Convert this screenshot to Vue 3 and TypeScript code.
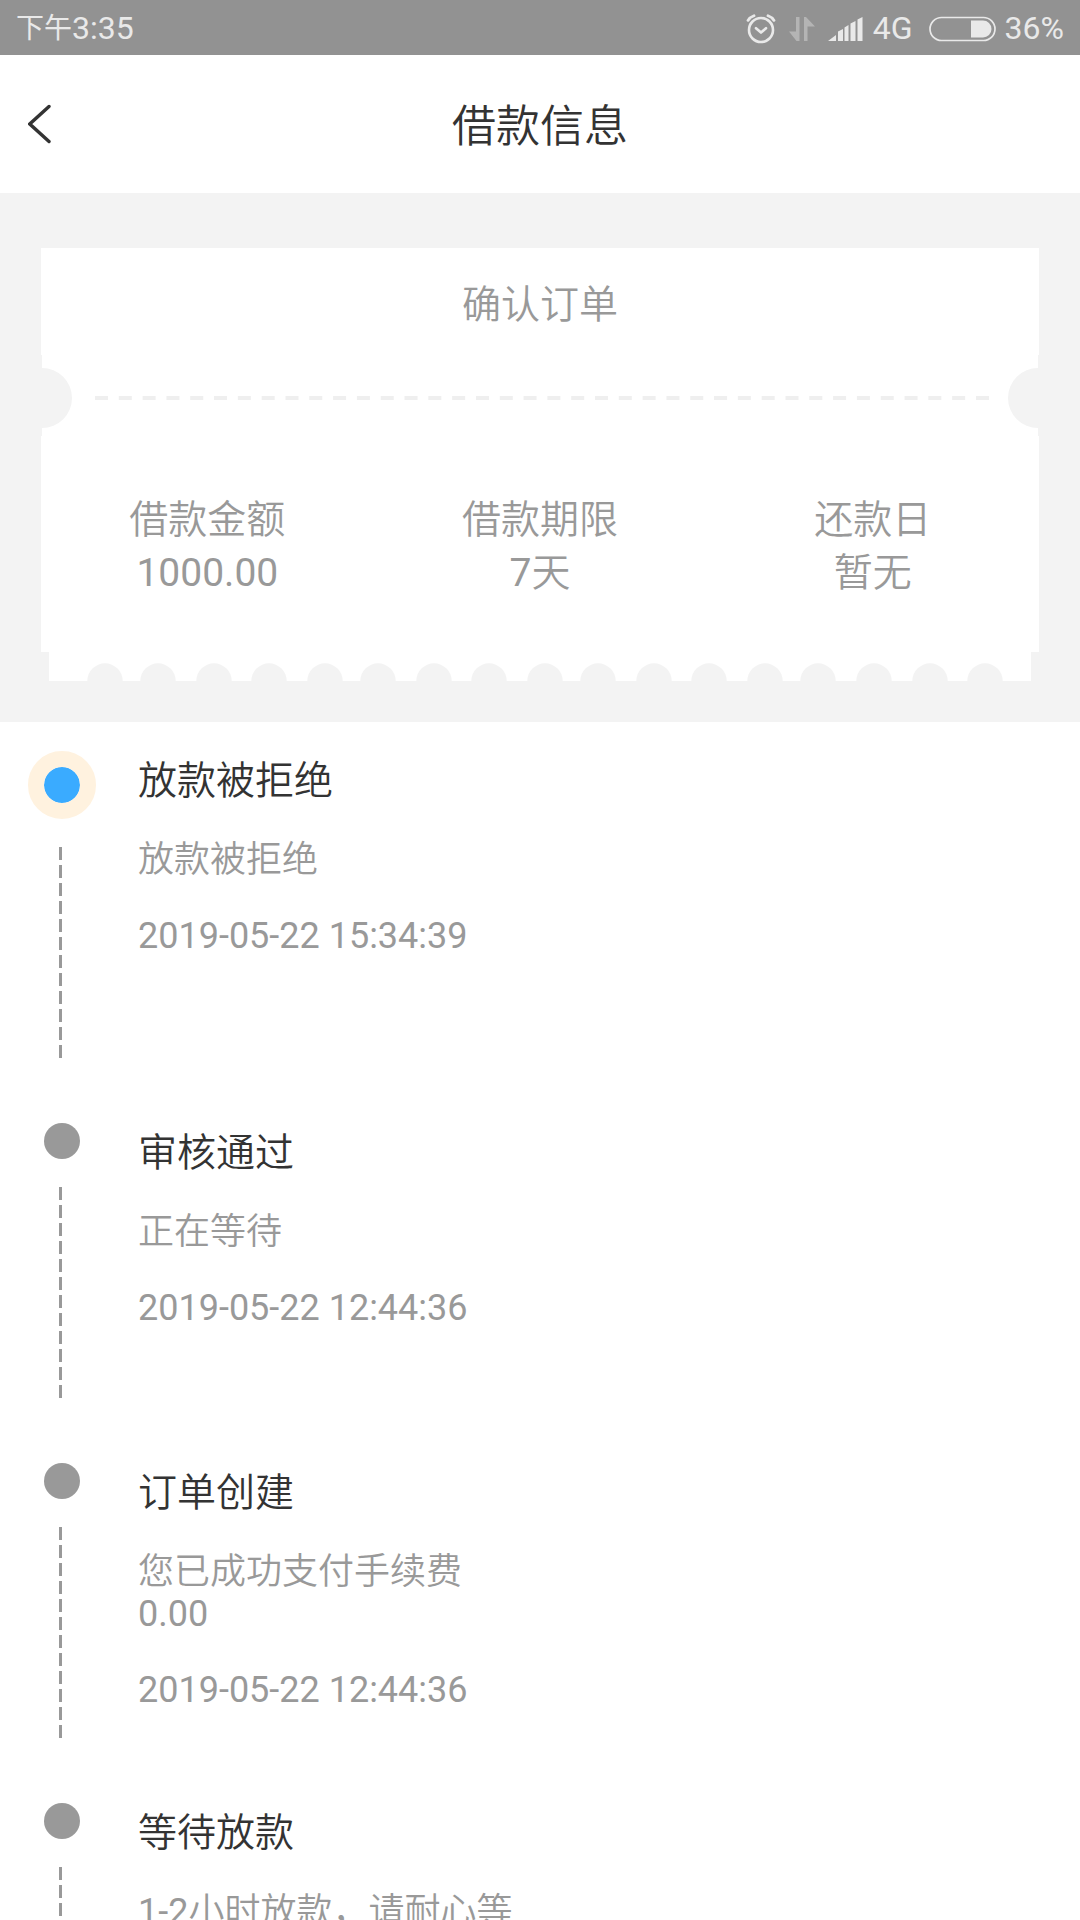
<script setup lang="ts">
interface Fact {
  label: string
  value: string
}

interface Step {
  title: string
  detail: string
  time?: string
  active?: boolean
}

interface Run {
  text: string
  numeric: boolean
}

const facts: Fact[] = [
  { label: '借款金额', value: '1000.00' },
  { label: '借款期限', value: '7天' },
  { label: '还款日', value: '暂无' },
]

const steps: Step[] = [
  { title: '放款被拒绝', detail: '放款被拒绝', time: '2019-05-22 15:34:39', active: true },
  { title: '审核通过', detail: '正在等待', time: '2019-05-22 12:44:36' },
  { title: '订单创建', detail: '您已成功支付手续费 0.00', time: '2019-05-22 12:44:36' },
  { title: '等待放款', detail: '1-2小时放款，请耐心等' },
]

// Centres of the half circles punched out of the ticket's lower edge
const holes: number[] = [56, 109, 165, 220, 276, 329, 385, 440, 496, 549, 605, 660, 716, 769, 825, 881, 936]

// Numbers take a regular weight, the Chinese text around them a lighter one
function runs(text: string): Run[] {
  return text
    .split(/([\d.-]+)/)
    .filter((part) => part !== '')
    .map((part) => ({ text: part, numeric: /^[\d.-]+$/.test(part) }))
}
</script>

<template>
  <div class="page" lang="zh-CN">
    <div class="status">
      <div class="clock"><span class="period">下午</span><span>3:35</span></div>
      <div class="indicators">
        <svg class="alarm" width="30" height="30" viewBox="0 0 30 30" fill="none" stroke="currentColor" stroke-linecap="round">
          <circle cx="15" cy="16" r="12" stroke-width="2.6" />
          <path d="M10 14.2l5 4.4 5-4.4" stroke-width="2.6" stroke-linejoin="round" />
          <path d="M2 6.4Q4 3.2 8 1.8M28 6.4Q26 3.2 22 1.8" stroke-width="2.8" />
        </svg>
        <svg class="traffic" width="26" height="26" viewBox="0 0 26 26" fill="currentColor">
          <path d="M7 1h3.5v24H7.500L0 15.500h7zM15 1h2l9 9.500h-7.500V25H15z" />
        </svg>
        <svg class="signal" width="35" height="24" viewBox="0 0 35 24" fill="currentColor">
          <path d="M0 24l8-6v6zM10 24V14.500l5-2.500v12zM16.500 24V10.500l4-2.500v16zM22.500 24V6.500l5-2.500v20zM29.500 24V2.500l5-2.500v24z" />
        </svg>
        <span class="network">4G</span>
        <svg class="battery" width="67" height="26" viewBox="0 0 67 26">
          <rect x="1" y="1.500" width="65" height="23" rx="11.500" fill="none" stroke="currentColor" stroke-width="1.700" />
          <path d="M42 4.500h12a8.500 8.500 0 0 1 0 17H42z" fill="currentColor" />
        </svg>
        <span>36%</span>
      </div>
    </div>

    <header class="bar">
      <button class="back" type="button" aria-label="返回">
        <svg width="24" height="40" viewBox="0 0 24 40" fill="none" stroke="currentColor" stroke-width="3.400" stroke-linecap="round">
          <path d="M21 2.500L1.800 20 21 37.500" />
        </svg>
      </button>
      <h1>借款信息</h1>
      <span></span>
    </header>

    <main>
      <section class="summary">
        <div class="ticket">
          <h2>确认订单</h2>
          <svg class="notches" viewBox="0 0 998 81" aria-hidden="true">
            <path d="M0 0h1v13a30 30 0 0 1 0 60v8H0zM998 0h-1v13a30 30 0 0 0 0 60v8h1z" fill="#f3f3f3" />
            <path d="M54 43h895" stroke="#efefef" stroke-width="4" stroke-dasharray="13 10.810" />
          </svg>
          <dl>
            <div v-for="fact in facts" :key="fact.label">
              <dt>{{ fact.label }}</dt>
              <dd><span v-for="(run, i) in runs(fact.value)" :key="i" :class="{ numeric: run.numeric }">{{ run.text }}</span></dd>
            </div>
          </dl>
        </div>
        <svg class="edge" viewBox="0 0 982 29" aria-hidden="true">
          <path d="M0 0h982v29H0z" fill="#fff" />
          <circle v-for="x in holes" :key="x" :cx="x" cy="29" r="17.700" fill="#f3f3f3" />
        </svg>
      </section>

      <ol class="timeline">
        <li v-for="step in steps" :key="step.title" :class="{ active: step.active }">
          <div class="rail" aria-hidden="true">
            <span class="dot"></span>
            <span class="dashes"></span>
          </div>
          <div class="entry">
            <h3>{{ step.title }}</h3>
            <p><span v-for="(run, i) in runs(step.detail)" :key="i" :class="{ numeric: run.numeric }">{{ run.text }}</span></p>
            <time v-if="step.time">{{ step.time }}</time>
          </div>
        </li>
      </ol>
    </main>
  </div>
</template>

<style>
body {
  margin: 0;
  background: #fff;
}
</style>

<style scoped>
.page {
  height: 100vh;
  overflow: hidden;
  background: #fff;
  color: #999;
  font-family: Roboto, "Noto Sans CJK SC", sans-serif;
}

h1,
h2,
h3,
p,
dl,
dd,
ol {
  margin: 0;
  padding: 0;
}

h1,
h2,
h3,
p,
dl {
  font-weight: 350;
}

.numeric {
  font-weight: 400;
}

svg {
  display: block;
  flex: none;
}

.status {
  box-sizing: border-box;
  display: flex;
  align-items: center;
  justify-content: space-between;
  height: 55px;
  padding: 2px 16px 0;
  background: #929292;
  color: #e9e9e9;
  font-size: 32px;
  line-height: 53px;
}

.clock,
.indicators {
  display: flex;
  align-items: center;
}

.period {
  font-size: 28px;
}

.traffic {
  margin-left: 13px;
  color: #b4b4b4;
}

.signal {
  margin-left: 13px;
}

.network {
  margin: 0 16px 0 10px;
}

.battery {
  margin-right: 9px;
}

.bar {
  display: grid;
  grid-template-columns: 1fr auto 1fr;
  align-items: center;
  height: 138px;
  color: #333;
}

.back {
  justify-self: start;
  padding: 16px 28px;
  border: 0;
  background: none;
  color: inherit;
}

h1 {
  padding-top: 6px;
  font-size: 44px;
  line-height: 52px;
}

.summary {
  padding: 55px 41px 41px;
  background: #f3f3f3;
}

.ticket {
  background: #fff;
}

h2 {
  padding: 31px 0 24px;
  font-size: 39px;
  line-height: 52px;
  text-align: center;
}

.notches {
  width: 100%;
}

dl {
  display: grid;
  grid-template-columns: repeat(3, 1fr);
  padding: 58px 0 52px;
  font-size: 39px;
  line-height: 53px;
  text-align: center;
}

.edge {
  width: calc(100% - 16px);
  margin: 0 8px;
}

.timeline {
  padding: 29px 28px 0;
  list-style: none;
}

.timeline li {
  display: flex;
  gap: 42px;
}

.rail {
  display: flex;
  flex: none;
  flex-direction: column;
  align-items: center;
  gap: 28px;
  width: 68px;
  padding-bottom: 65px;
}

.dot {
  width: 36px;
  height: 36px;
  border-radius: 50%;
  background: #999;
}

.active .dot {
  border: 16px solid #fff2df;
  background: #3aabff;
  background-clip: padding-box;
}

.dashes {
  width: 3px;
  height: 211px;
  margin-right: 3px;
  background: repeating-linear-gradient(#999 0 13px, transparent 13px 18px);
}

.entry {
  display: flex;
  flex-direction: column;
  gap: 34px;
  max-width: 380px;
  padding-top: 6px;
  font-size: 36px;
  line-height: 42px;
}

h3 {
  color: #333;
  font-size: 39px;
  line-height: 48px;
}
</style>
